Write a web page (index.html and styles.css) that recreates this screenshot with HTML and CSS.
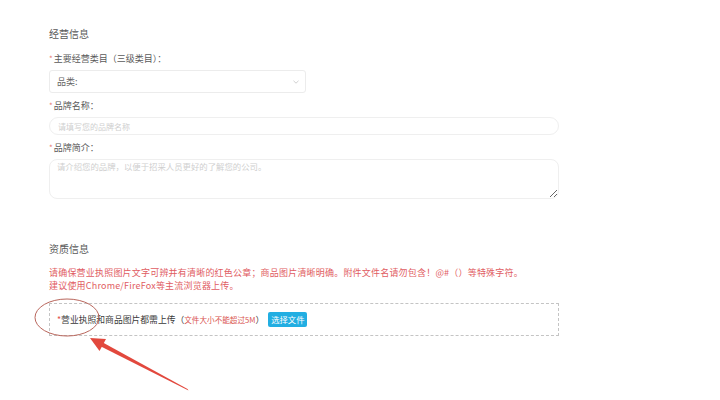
FILE: index.html
```html
<!DOCTYPE html>
<html lang="zh-CN">
<head>
<meta charset="utf-8">
<title>经营信息</title>
<link rel="stylesheet" href="styles.css">
</head>
<body>
<div class="page">
  <section class="block">
    <h2 class="title">经营信息</h2>
    <div class="label"><span class="req">*</span>主要经营类目（三级类目）：</div>
    <div class="select">
      <span>品类:</span>
      <svg class="caret" width="6" height="4" viewBox="0 0 6 4"><path d="M0.5 0.8 L3 3.2 L5.5 0.8" fill="none" stroke="#c4c4c4" stroke-width="0.8"/></svg>
    </div>
    <div class="label gap"><span class="req">*</span>品牌名称：</div>
    <input class="input" type="text" placeholder="请填写您的品牌名称">
    <div class="label gap"><span class="req">*</span>品牌简介：</div>
    <textarea class="area" placeholder="请介绍您的品牌，以便于招采人员更好的了解您的公司。"></textarea>
  </section>

  <section class="block second">
    <h2 class="title">资质信息</h2>
    <p class="warn">请确保营业执照图片文字可辨并有清晰的红色公章；商品图片清晰明确。附件文件名请勿包含！@#（）等特殊字符。<br>建议使用Chrome/FireFox等主流浏览器上传。</p>
    <div class="upload">
      <span class="up-text"><span class="req2">*</span>营业执照和商品图片都需上传（<span class="limit">文件大小不能超过5M</span>）</span>
      <span class="btn">选择文件</span>
    </div>
  </section>

  <svg class="annot" width="720" height="400" viewBox="0 0 720 400">
    <ellipse cx="67" cy="317.5" rx="32" ry="18.5" fill="none" stroke="#b9665c" stroke-width="1"/>
    <polygon points="188.5,390.5 187.5,389 101,341.5 99,345.5" fill="#e2483d"/>
    <polygon points="90,338 106,339 99.5,351" fill="#e2483d"/>
  </svg>
</div>
</body>
</html>
```
FILE: styles.css
```css
html, body {
  margin: 0;
  padding: 0;
  background: #fff;
}
body {
  font-family: "Noto Sans CJK SC", "Noto Sans", sans-serif;
  color: #555;
}
.page {
  position: relative;
  width: 720px;
  height: 400px;
  overflow: hidden;
}
.block {
  padding-left: 49px;
  width: 510px;
  display: flex;
  flex-direction: column;
}
.title {
  margin: 27px 0 0;
  font-size: 10px;
  line-height: 14px;
  font-weight: 400;
  color: #5a5a5a;
}
.label {
  margin-top: 12px;
  font-size: 9px;
  line-height: 12px;
  color: #5a5a5a;
}
.label.gap {
  margin-top: 7px;
}
.req {
  color: #e77a73;
  font-size: 8px;
  margin-right: 1px;
}
.select {
  margin-top: 5px;
  box-sizing: border-box;
  width: 257px;
  height: 23px;
  border: 1px solid #ececec;
  border-radius: 3px;
  display: flex;
  align-items: center;
  justify-content: space-between;
  padding: 0 6px 0 7px;
  font-size: 9px;
  color: #666;
}
.caret {
  display: block;
}
.input {
  margin-top: 5px;
  box-sizing: border-box;
  width: 510px;
  height: 18px;
  border: 1px solid #efefef;
  border-radius: 9px;
  padding: 0 8px;
  font-family: inherit;
  font-size: 8px;
  outline: none;
}
.input::placeholder,
.area::placeholder {
  color: #cfcfcf;
}
.area {
  margin-top: 5px;
  box-sizing: border-box;
  width: 510px;
  height: 40px;
  border: 1px solid #efefef;
  border-radius: 8px;
  padding: 0 7px;
  font-family: inherit;
  font-size: 8.4px;
  line-height: 12px;
  resize: vertical;
  outline: none;
}
.second .title {
  margin-top: 43px;
}
.warn {
  margin: 10px 0 0;
  font-size: 9px;
  line-height: 13px;
  color: #df5c62;
  letter-spacing: 0.2px;
  white-space: nowrap;
}
.upload {
  margin-top: 11px;
  box-sizing: border-box;
  width: 510px;
  height: 33px;
  border: 1px dashed #c4c4c4;
  display: flex;
  align-items: center;
  padding-left: 7px;
  gap: 4px;
}
.up-text {
  font-size: 8.8px;
  color: #3a3a3a;
  font-weight: 400;
  white-space: nowrap;
}
.req2 {
  color: #e2554d;
}
.limit {
  color: #d9534f;
  font-size: 7.6px;
}
.btn {
  background: #22aee2;
  color: #fff;
  font-size: 8.3px;
  line-height: 15px;
  padding: 0 3px;
  border-radius: 2px;
  white-space: nowrap;
}
.annot {
  position: absolute;
  left: 0;
  top: 0;
  pointer-events: none;
}
```
